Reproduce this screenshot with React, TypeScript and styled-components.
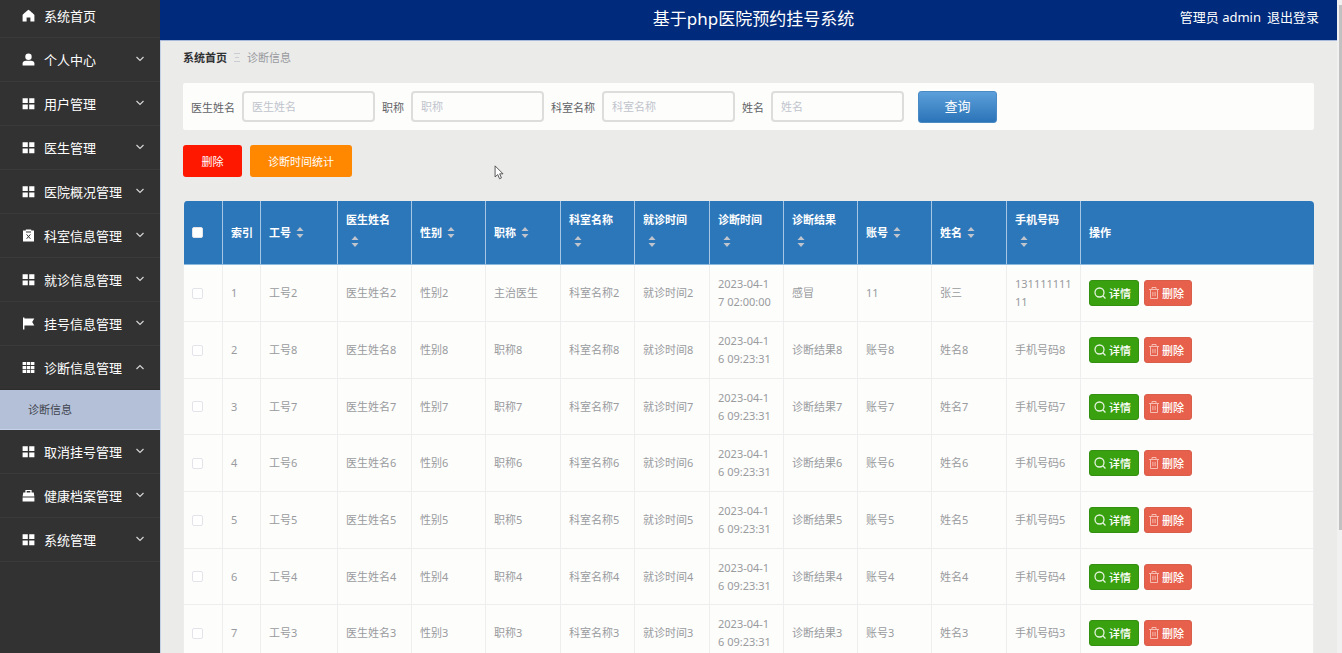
import React, { useState } from 'react';
import styled, { createGlobalStyle } from 'styled-components';

const GlobalStyle = createGlobalStyle`
  * { box-sizing: border-box; }
  body {
    margin: 0;
    background: #ebebea;
    font-family: "Noto Sans", "Noto Sans CJK SC", sans-serif;
    font-size: 11px;
    color: #606266;
  }
  button, input { font-family: inherit; }
`;

const Page = styled.div`
  display: flex;
  height: 100vh;
  overflow: hidden;
`;

const Sidebar = styled.nav`
  flex: 0 0 160px;
  background: #323232;
`;

const MenuList = styled.ul`
  list-style: none;
  margin: 0;
  padding: 0;
`;

const MenuButton = styled.button<{ $first?: boolean; $open?: boolean }>`
  display: flex;
  align-items: center;
  width: 100%;
  height: ${(p) => (p.$first ? 38 : 44)}px;
  padding: 0 15px 0 22px;
  padding-bottom: ${(p) => (p.$first ? 6 : 0)}px;
  border: 0;
  border-bottom: 1px solid ${(p) => (p.$open ? '#2c2c2c' : '#3a3a3a')};
  background: none;
  color: #fff;
  font-size: 13px;
  line-height: 20px;
  cursor: pointer;
`;

const MenuIcon = styled.svg`
  width: 13px;
  height: 13px;
  margin-right: 9px;
  fill: #fff;
  fill-rule: evenodd;
`;

const MenuArrow = styled.svg<{ $open?: boolean }>`
  width: 10px;
  height: 10px;
  margin-left: auto;
  margin-bottom: 2px;
  fill: none;
  stroke: #d4d4d4;
  stroke-width: 1.2;
  transform: ${(p) => (p.$open ? 'rotate(180deg)' : 'none')};
`;

const SubLink = styled.a`
  display: block;
  height: 40px;
  padding-left: 28px;
  border-bottom: 1px solid #c6d2e8;
  background: #b4c0d8;
  color: #3f444d;
  line-height: 39px;
  text-decoration: none;
`;

const Main = styled.div`
  flex: 1;
  min-width: 0;
`;

const Header = styled.header`
  display: grid;
  grid-template-columns: 1fr auto 1fr;
  align-items: center;
  height: 41px;
  padding: 0 18px 3px 28px;
  border-bottom: 1px solid #a9b9da;
  background: #002a7c;
  color: #fff;
`;

const Title = styled.h1`
  grid-column: 2;
  margin: 0;
  font-size: 17px;
  font-weight: 400;
  line-height: 24px;
`;

const UserBar = styled.div`
  display: flex;
  justify-content: flex-end;
  gap: 6px;
  padding-bottom: 3px;
  font-size: 13px;
  line-height: 20px;
`;

const LogoutLink = styled.a`
  color: #fff;
  text-decoration: none;
`;

const Content = styled.main`
  min-height: 100%;
  padding: 7px 23px 0 22px;
  border-left: 1px solid #c3d0e6;
`;

const Breadcrumb = styled.nav`
  display: flex;
  align-items: center;
  gap: 7px;
  height: 18px;
  color: #97999d;
`;

const HomeLink = styled.a`
  color: #303133;
  font-weight: 700;
  text-decoration: none;
`;

const Separator = styled.svg`
  width: 6px;
  height: 9px;
  stroke: #c9ccd2;
`;

const SearchForm = styled.form`
  display: flex;
  align-items: center;
  height: 47px;
  margin-top: 17px;
  padding: 0 8px;
  border-radius: 2px;
  background: #fdfdfc;
`;

const Field = styled.label`
  display: flex;
  align-items: center;
  gap: 7px;
  margin-right: 7px;
  white-space: nowrap;
`;

const TextInput = styled.input`
  width: 133px;
  height: 31px;
  padding: 0 8px;
  border: 2px solid #dddddc;
  border-radius: 4px;
  background: #fdfdfc;
  color: #606266;
  font-size: 11px;
  outline: none;
  &::placeholder { color: #c0c4cc; opacity: 1; }
`;

const SearchButton = styled.button`
  width: 79px;
  height: 32px;
  margin-left: 7px;
  padding: 0 0 3px;
  border: 1px solid #4a8bc6;
  border-radius: 3px;
  background: linear-gradient(#5c9fda, #2b74b8);
  color: #fff;
  font-size: 13px;
`;

const Toolbar = styled.div`
  display: flex;
  gap: 8px;
  margin-top: 15px;
`;

const ToolButton = styled.button<{ $color: string }>`
  min-width: 59px;
  height: 32px;
  padding: 0 18px 1px;
  border: 0;
  border-radius: 3px;
  background: ${(p) => p.$color};
  color: #fff;
  font-size: 11px;
`;

const DataTable = styled.table`
  width: 100%;
  margin-top: 24px;
  border: 0;
  border-left: 1px solid #ededec;
  border-collapse: separate;
  border-spacing: 0;
  border-radius: 4px 4px 0 0;
  table-layout: fixed;
  overflow: hidden;
`;

const HeadCell = styled.th`
  height: 64px;
  padding: 0 0 0 8px;
  border-right: 1px solid #a6c6e3;
  border-bottom: 1px solid #8db8de;
  background: #2c77ba;
  color: #fff;
  font-weight: 700;
  line-height: 20px;
  text-align: left;
  vertical-align: middle;
  &:last-child { border-right: 0; }
`;

const HeadLabel = styled.div<{ $stacked?: boolean }>`
  display: flex;
  flex-direction: ${(p) => (p.$stacked ? 'column' : 'row')};
  align-items: ${(p) => (p.$stacked ? 'flex-start' : 'center')};
  gap: ${(p) => (p.$stacked ? 6 : 5)}px;
  padding-bottom: ${(p) => (p.$stacked ? 9 : 0)}px;
  white-space: nowrap;
`;

const SortButton = styled.button<{ $stacked?: boolean }>`
  display: flex;
  margin-left: ${(p) => (p.$stacked ? 5 : 0)}px;
  padding: 0;
  border: 0;
  background: none;
`;

const SortIcon = styled.svg`
  width: 8px;
  height: 11px;
  fill: #c0c4cc;
`;

const BodyRow = styled.tr`
  height: 57px;
  &:nth-child(3n) { height: 56px; }
`;

const Cell = styled.td`
  padding: 0 8px;
  border-right: 1px solid #eeeeee;
  border-bottom: 1px solid #eeeeee;
  background: #fdfdfc;
  color: #999b9e;
  line-height: 18px;
  vertical-align: middle;
  word-break: break-all;
`;

const CheckBox = styled.input`
  display: block;
  appearance: none;
  width: 11px;
  height: 11px;
  margin: 0;
  border: 1px solid #e2e4ea;
  border-radius: 2px;
  background: #fff;
`;

const Actions = styled.div`
  display: flex;
  gap: 5px;
`;

const ActionButton = styled.button<{ $color: string; $edge: string }>`
  display: flex;
  align-items: center;
  gap: 3px;
  height: 26px;
  padding: 0 7px 0 4px;
  border: 1px solid ${(p) => p.$edge};
  border-radius: 3px;
  background: ${(p) => p.$color};
  color: #fff;
  font-size: 11px;
  font-weight: 500;
  white-space: nowrap;
`;

const ActionIcon = styled.svg<{ $faint?: boolean }>`
  width: ${(p) => (p.$faint ? 10 : 12)}px;
  height: 12px;
  fill: none;
  stroke: ${(p) => (p.$faint ? '#f6bdb2' : '#e4f3df')};
  stroke-width: ${(p) => (p.$faint ? 1 : 1.3)};
`;

const ScrollTrack = styled.div`
  flex: 0 0 5px;
  padding: 5px 0 0 2px;
  background: #f1f1f1;
`;

const ScrollThumb = styled.div`
  height: 81%;
  background: #c1c1c1;
`;

const Pointer = styled.svg`
  position: absolute;
  left: 494px;
  top: 165px;
  width: 11px;
  height: 15px;
  pointer-events: none;
`;

const icons: Record<string, React.ReactNode> = {
  home: <path d="M6.5 0.8C6.9.8 12.2 5.4 12.4 6v6.4H8.4V8.6H4.6v3.8H.6V6C.8 5.4 6.1.8 6.5.8Z" />,
  user: (
    <>
      <circle cx="6.5" cy="3.7" r="3.2" />
      <path d="M.6 12.4V10.6C.6 8.6 2 7.8 4 7.8h5c2 0 3.4.8 3.4 2.8v1.8Z" />
    </>
  ),
  grid: <path d="M.6 1.2h5.2v4.9H.6ZM7.2 1.2h5.2v4.9H7.2ZM.6 7.4h5.2v4.9H.6ZM7.2 7.4h5.2v4.9H7.2Z" />,
  clipboard: (
    <>
      <path d="M1 1.6h2.8V.5h5.4v1.1H12v11H1Z" />
      <path d="M4 3h5M4.6 5.4l3.8 4.4M8.4 5.4 4.6 9.8" fill="none" stroke="#323232" strokeWidth="1" />
    </>
  ),
  flag: <path d="M1 .6h1.4v1h9.9L10.2 5l2.1 3.4H2.4v4.2H1Z" />,
  table: <path d="M.6 1h3.5v3H.6ZM4.8 1h3.4v3H4.8ZM8.9 1h3.5v3H8.9ZM.6 4.9h3.5v3H.6ZM4.8 4.9h3.4v3H4.8ZM8.9 4.9h3.5v3H8.9ZM.6 8.8h3.5v3.2H.6ZM4.8 8.8h3.4v3.2H4.8ZM8.9 8.8h3.5v3.2H8.9Z" />,
  briefcase: <path d="M3.4 3.4V.9h6.2v2.5h2.1l.7 4.2H.6l.7-4.2ZM4.7 3.4h3.6V2.1H4.7ZM.6 8.4h11.8v4H.6Z" />,
};

const menu = [
  { icon: 'home', label: '系统首页' },
  { icon: 'user', label: '个人中心' },
  { icon: 'grid', label: '用户管理' },
  { icon: 'grid', label: '医生管理' },
  { icon: 'grid', label: '医院概况管理' },
  { icon: 'clipboard', label: '科室信息管理' },
  { icon: 'grid', label: '就诊信息管理' },
  { icon: 'flag', label: '挂号信息管理' },
  { icon: 'table', label: '诊断信息管理', child: '诊断信息' },
  { icon: 'grid', label: '取消挂号管理' },
  { icon: 'briefcase', label: '健康档案管理' },
  { icon: 'grid', label: '系统管理' },
];

const columns = [
  { label: '工号', width: 77 },
  { label: '医生姓名', width: 74 },
  { label: '性别', width: 74 },
  { label: '职称', width: 75 },
  { label: '科室名称', width: 74 },
  { label: '就诊时间', width: 75 },
  { label: '诊断时间', width: 74 },
  { label: '诊断结果', width: 74 },
  { label: '账号', width: 74 },
  { label: '姓名', width: 75 },
  { label: '手机号码', width: 74 },
];

const makeRow = (n: number) =>
  columns.map((c) => (c.label === '诊断时间' ? '2023-04-16 09:23:31' : `${c.label}${n}`));

const rows = [
  ['工号2', '医生姓名2', '性别2', '主治医生', '科室名称2', '就诊时间2', '2023-04-17 02:00:00', '感冒', '11', '张三', '13111111111'],
  ...[8, 7, 6, 5, 4, 3].map(makeRow),
];

const filters = ['医生姓名', '职称', '科室名称', '姓名'];

export default function App() {
  const [selected, setSelected] = useState<number[]>([]);
  const toggle = (i: number) =>
    setSelected((s) => (s.includes(i) ? s.filter((x) => x !== i) : [...s, i]));
  const allSelected = selected.length === rows.length;

  return (
    <Page>
      <GlobalStyle />
      <Sidebar>
        <MenuList>
          {menu.map((item, i) => (
            <li key={item.label}>
              <MenuButton type="button" $first={i === 0} $open={!!item.child}>
                <MenuIcon viewBox="0 0 13 13" aria-hidden="true">{icons[item.icon]}</MenuIcon>
                {item.label}
                {i > 0 && (
                  <MenuArrow viewBox="0 0 10 10" $open={!!item.child} aria-hidden="true">
                    <path d="M1.5 3 5 6.5 8.5 3" />
                  </MenuArrow>
                )}
              </MenuButton>
              {item.child && <SubLink href="#diagnosis">{item.child}</SubLink>}
            </li>
          ))}
        </MenuList>
      </Sidebar>
      <Main>
        <Header>
          <Title>基于php医院预约挂号系统</Title>
          <UserBar>
            <span>管理员 admin</span>
            <LogoutLink href="#logout">退出登录</LogoutLink>
          </UserBar>
        </Header>
        <Content>
          <Breadcrumb>
            <HomeLink href="#home">系统首页</HomeLink>
            <Separator viewBox="0 0 6 9" aria-hidden="true">
              <path d="M0 .5h6M1 4.5h4M0 8.5h6" />
            </Separator>
            <span>诊断信息</span>
          </Breadcrumb>
          <SearchForm onSubmit={(e) => e.preventDefault()}>
            {filters.map((f) => (
              <Field key={f}>
                {f}
                <TextInput type="text" placeholder={f} />
              </Field>
            ))}
            <SearchButton type="submit">查询</SearchButton>
          </SearchForm>
          <Toolbar>
            <ToolButton type="button" $color="#ff1800">删除</ToolButton>
            <ToolButton type="button" $color="#ff8800">诊断时间统计</ToolButton>
          </Toolbar>
          <DataTable>
            <colgroup>
              <col width={39} />
              <col width={38} />
              {columns.map((c) => <col key={c.label} width={c.width} />)}
              <col />
            </colgroup>
            <thead>
              <tr>
                <HeadCell>
                  <CheckBox
                    type="checkbox"
                    aria-label="全选"
                    checked={allSelected}
                    onChange={() => setSelected(allSelected ? [] : rows.map((_, i) => i))}
                  />
                </HeadCell>
                <HeadCell>索引</HeadCell>
                {columns.map(({ label }) => {
                  const stacked = label.length > 2;
                  return (
                    <HeadCell key={label}>
                      <HeadLabel $stacked={stacked}>
                        {label}
                        <SortButton type="button" $stacked={stacked} aria-label={`${label}排序`}>
                          <SortIcon viewBox="0 0 8 11">
                            <path d="M4 0 7.5 4H.5ZM4 11 .5 7h7Z" />
                          </SortIcon>
                        </SortButton>
                      </HeadLabel>
                    </HeadCell>
                  );
                })}
                <HeadCell>操作</HeadCell>
              </tr>
            </thead>
            <tbody>
              {rows.map((row, i) => (
                <BodyRow key={row[0]}>
                  <Cell>
                    <CheckBox
                      type="checkbox"
                      aria-label={`选择${row[0]}`}
                      checked={selected.includes(i)}
                      onChange={() => toggle(i)}
                    />
                  </Cell>
                  <Cell>{i + 1}</Cell>
                  {row.map((value, c) => <Cell key={columns[c].label}>{value}</Cell>)}
                  <Cell>
                    <Actions>
                      <ActionButton type="button" $color="#39a10f" $edge="#339010">
                        <ActionIcon viewBox="0 0 12 12" aria-hidden="true">
                          <circle cx="5.5" cy="5.5" r="4.5" />
                          <path d="m8.8 8.8 2.7 2.7" />
                        </ActionIcon>
                        详情
                      </ActionButton>
                      <ActionButton type="button" $color="#e6604b" $edge="#d95f4b">
                        <ActionIcon viewBox="0 0 10 12" $faint aria-hidden="true">
                          <path d="M0 2.5h10M3 2.5v-2h4v2M1.5 2.5v9h7v-9M3.9 4.8v4.4M6.1 4.8v4.4" />
                        </ActionIcon>
                        删除
                      </ActionButton>
                    </Actions>
                  </Cell>
                </BodyRow>
              ))}
            </tbody>
          </DataTable>
        </Content>
      </Main>
      <ScrollTrack aria-hidden="true">
        <ScrollThumb />
      </ScrollTrack>
      <Pointer viewBox="0 0 12 17" aria-hidden="true">
        <path d="M1 1v12.5l3-2.7 2 4.8 2.2-1-2-4.6H10Z" fill="#fff" stroke="#444" />
      </Pointer>
    </Page>
  );
}
